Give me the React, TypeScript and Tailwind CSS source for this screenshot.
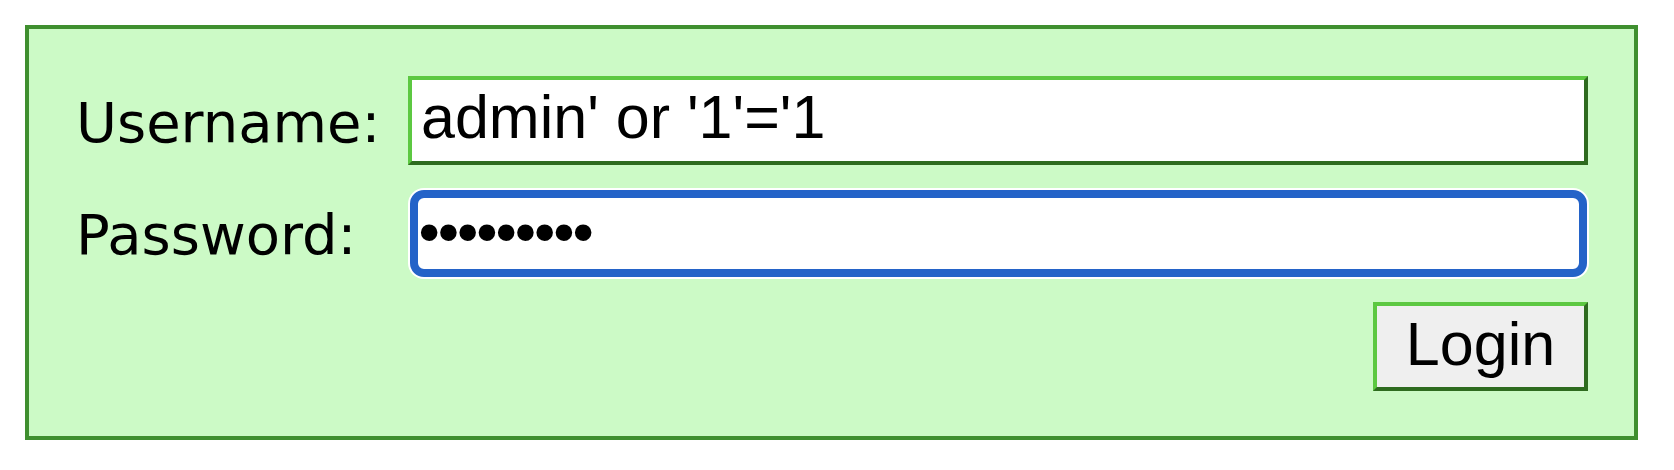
import React from "react";

const labelClass =
  "text-[56px] text-black leading-none pt-[4px] font-['DejaVu_Sans',Verdana,sans-serif]";

const LoginForm = () => {
  return (
    <div className="pt-[25px] pl-[25px]">
      <form
        className="w-[1613px] border-4 border-[#3f8f2f] bg-[#ccfac6] pt-[47px] pl-[47px] pr-[46px] pb-[45px] flex flex-col"
        onSubmit={(e) => e.preventDefault()}
      >
        <div className="grid grid-cols-[332px_1fr] items-center h-[89px]">
          <label className={labelClass}>Username:</label>
          <input
            type="text"
            defaultValue="admin' or '1'='1"
            className="h-[89px] w-full bg-white border-4 border-t-[#5cc841] border-l-[#5cc841] border-b-[#2e6b1f] border-r-[#2e6b1f] pl-[9px] pb-[5px] text-[61px] text-black outline-none font-['Liberation_Sans',Arial,sans-serif]"
          />
        </div>

        <div className="grid grid-cols-[332px_1fr] items-center h-[90px] mt-[23px]">
          <label className={labelClass}>Password:</label>
          <input
            type="password"
            defaultValue="password1"
            className="h-[87px] m-[1.5px] bg-white border-[8px] border-[#2463c8] rounded-[14px] shadow-[0_0_0_2px_#ffffff] pl-[1px] text-[61px] tracking-[-2.1px] text-black outline-none font-['Liberation_Sans',Arial,sans-serif]"
          />
        </div>

        <div className="flex justify-end mt-[24px]">
          <button
            type="submit"
            className="w-[215px] h-[89px] bg-[#efefef] border-4 border-t-[#5cc841] border-l-[#5cc841] border-b-[#2e6b1f] border-r-[#2e6b1f] pb-[4px] text-[61px] leading-none text-black font-['Liberation_Sans',Arial,sans-serif]"
          >
            Login
          </button>
        </div>
      </form>
    </div>
  );
};

export default function App() {
  return (
    <div className="w-[1674px] h-[470px] bg-white">
      <LoginForm />
    </div>
  );
}
